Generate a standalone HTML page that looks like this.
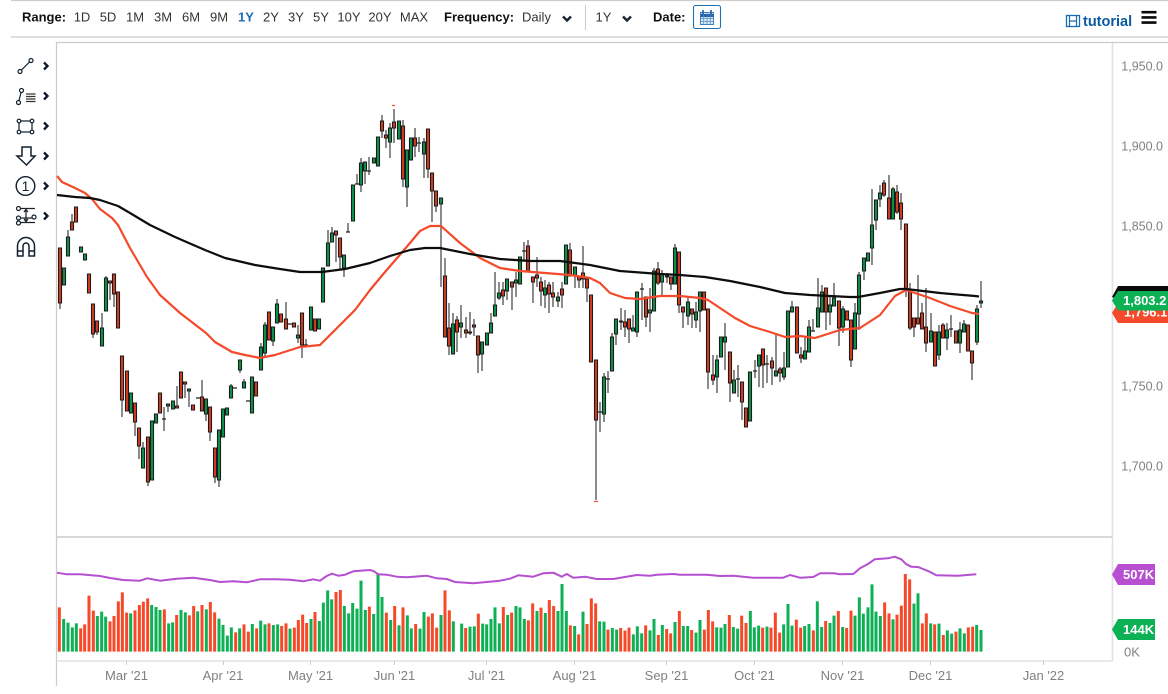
<!DOCTYPE html>
<html><head><meta charset="utf-8"><style>
html,body{margin:0;padding:0;background:#fff;width:1168px;height:694px;overflow:hidden}
svg{display:block}
text{font-family:"Liberation Sans",sans-serif;font-size:13px}
.n{fill:#333;text-anchor:middle}
.b{fill:#111;font-weight:bold}
.a{fill:#808080;text-anchor:middle}
.y{fill:#808080;text-anchor:end;font-size:12.5px}
</style></head><body>
<svg width="1168" height="694" viewBox="0 0 1168 694" xmlns="http://www.w3.org/2000/svg">
<defs><filter id="s" x="-2%" y="-2%" width="104%" height="104%"><feGaussianBlur stdDeviation=".35"/></filter></defs>
<rect width="1168" height="694" fill="#fff"/>
<!-- frame -->
<path d="M11 .5H1168M11 37H1168M56 42.500H1168" stroke="#ccc" stroke-width="1.200" fill="none"/>
<path d="M56.500 42V686" stroke="#ccc" stroke-width="1.200"/>
<path d="M1112.500 43V536M1112.500 538V661" stroke="#e2e2e2" stroke-width="1.600"/>
<path d="M57 537H1113" stroke="#ccc" stroke-width="1.600"/>
<path d="M57 661H1113" stroke="#e2e2e2" stroke-width="1.600"/>
<path d="M126.500 661v4M223.500 661v4M310.500 661v4M394.500 661v4M486.500 661v4M574.500 661v4M666.500 661v4M754.500 661v4M842.500 661v4M930.500 661v4M1043.500 661v4" stroke="#ccc"/>
<path d="M585.500 5V30" stroke="#ccc"/>
<!-- top bar -->
<text class="b" x="22" y="21.500">Range:</text>
<text class="n" x="82" y="21.500">1D</text><text class="n" x="108" y="21.500">5D</text><text class="n" x="135" y="21.500">1M</text><text class="n" x="163" y="21.500">3M</text><text class="n" x="191" y="21.500">6M</text><text class="n" x="219" y="21.500">9M</text>
<text class="n" x="246" y="21.500" style="fill:#1b6db5;font-weight:bold">1Y</text>
<text class="n" x="271" y="21.500">2Y</text><text class="n" x="296" y="21.500">3Y</text><text class="n" x="321" y="21.500">5Y</text><text class="n" x="349" y="21.500">10Y</text><text class="n" x="380" y="21.500">20Y</text><text class="n" x="414" y="21.500">MAX</text>
<text class="b" x="444" y="21.500">Frequency:</text>
<text class="n" x="536.500" y="21.500">Daily</text>
<path d="M563 16.500l4 4 4-4M623 16.500l4 4 4-4" stroke="#1a2433" stroke-width="2.500" fill="none"/>
<text class="n" x="603.500" y="21.500">1Y</text>
<text class="b" x="653" y="21.500">Date:</text>
<rect x="693.500" y="5.500" width="27" height="23" rx="2" fill="#fff" stroke="#1f6fb2" stroke-width="1.100"/>
<rect x="700.500" y="12.500" width="13" height="12" fill="#dbe8f5" stroke="#3f7fc0"/>
<path d="M700.500 15.500h13" stroke="#1f5fa5" stroke-width="3"/>
<path d="M703.700 12v12M707 12v12M710.300 12v12M701 18.500h12M701 21.500h12" stroke="#5a8fc8" stroke-width=".8"/>
<path d="M703 10v4M711 10v4" stroke="#1f5fa5" stroke-width="1.600"/>
<rect x="1066.500" y="15.500" width="13" height="11" fill="#fff" stroke="#1b6db0" stroke-width="1.300"/>
<path d="M1069.500 15v12M1076.500 15v12M1069.500 21h7" stroke="#1b6db0" stroke-width="1.200"/>
<text x="1083" y="26" style="font-size:14.500px;font-weight:bold;fill:#0b5aa0">tutorial</text>
<path d="M1141.500 12.200h15M1141.500 17.400h15M1141.500 22.600h15" stroke="#0a0a0a" stroke-width="2.600"/>
<!-- left tools -->
<g fill="#fff" stroke="#10202f" stroke-width="1.200">
<path d="M21.500 70L29.500 62" fill="none"/><circle cx="20" cy="71.500" r="2"/><circle cx="31" cy="60.500" r="2"/>
<path d="M18.500 102L21.500 91" fill="none"/><circle cx="18.500" cy="102.500" r="2"/><circle cx="21.500" cy="90.500" r="2"/>
<path d="M26 94h9.500M26 96.500h9.500M26 99h9.500M26 101.500h9.500" fill="none" stroke="#333"/>
<rect x="19" y="121" width="13" height="11" fill="none"/><circle cx="19" cy="121" r="1.800"/><circle cx="32" cy="121" r="1.800"/><circle cx="19" cy="132" r="1.800"/><circle cx="32" cy="132" r="1.800"/>
<path d="M22 147H31V156H35L26.500 165L17 156H22Z" stroke-width="1.500"/>
<circle cx="25.500" cy="186" r="9.300" stroke-width="1.400"/>
<path d="M17 208.500H35M17 218H35M17 222.500H35" stroke="#222" fill="none"/>
<path d="M26 209.500V222M24 212l2-2.500 2 2.500M24 219l2 2.500 2-2.500" fill="none"/>
<circle cx="18.500" cy="208.500" r="2"/><circle cx="18.500" cy="218" r="2"/><circle cx="18.500" cy="223" r="2"/><circle cx="34" cy="217" r="2"/>
<path d="M17.500 256V246a8.500 8.500 0 0 1 17 0V256H29V246a3 3 0 0 0-6 0V256ZM17.500 251H23M29 251H34.500" stroke-width="1.500"/>
</g>
<text x="25.500" y="191" style="font-size:14px;fill:#10202f;text-anchor:middle">1</text>
<path d="M44 62.500l3.500 3.500-3.500 3.500M44 92.500l3.500 3.500-3.500 3.500M44 122.500l3.500 3.500-3.500 3.500M44 152.500l3.500 3.500-3.500 3.500M44 182.500l3.500 3.500-3.500 3.500M44 212.500l3.500 3.500-3.500 3.500" stroke="#0c1626" stroke-width="2.300" fill="none"/>
<g filter="url(#s)">
<!-- wicks -->
<path stroke="#777" stroke-width="1.700" fill="none" d="M60 248V309M68 230V237M72 214V222M93 334V338M97 332V335M102 313V328M106 276V278M110 283V300M114 294V307M122 400V417M135 422V436M139 446V459M143 442V448M148 482V486M164 407V431M168 406V412M177 386V406M185 384V398M189 391V407M202 380V397M206 414V421M210 432V441M215 477V483M219 480V487M231 384V386M240 370V373M244 379V382M261 343V347M265 322V357M273 341V346M277 299V304M286 302V319M298 325V343M302 345V358M306 339V347M328 230V243M332 227V233M336 235V262M340 257V270M344 268V277M348 223V232M357 174V184M361 158V192M365 171V184M369 157V175M382 115V138M386 130V148M390 123V158M394 109V143M403 120V187M407 187V207M415 128V157M419 137V152M424 138V178M428 169V178M432 191V222M436 206V212M441 204V287M445 258V276M449 303V355M453 313V324M457 316V352M461 305V338M466 317V338M470 312V335M474 319V336M478 355V373M482 354V371M491 313V323M495 272V305M499 282V300M503 282V305M507 291V300M512 287V310M516 272V297M524 242V260M528 240V246M533 282V303M537 257V287M541 277V306M545 280V308M549 282V313M553 282V307M558 292V307M562 282V308M570 243V250M575 276V288M579 280V288M583 246V288M587 288V302M596 420V500M600 402V432M604 373V422M608 371V393M612 333V337M616 334V345M621 308V330M625 310V337M629 329V343M633 315V328M637 332V337M642 283V320M646 317V327M650 288V332M654 268V271M658 262V285M662 270V295M667 273V283M671 284V290M675 244V248M679 305V313M683 312V328M688 297V325M692 314V328M696 302V328M700 311V332M708 372V389M713 355V385M717 355V393M721 353V357M725 323V370M730 383V402M734 370V380M738 365V397M742 402V420M755 360V378M759 366V387M763 365V388M767 355V383M772 357V385M776 333V371M780 367V382M784 352V380M792 301V307M801 347V363M805 337V351M809 320V327M813 319V331M818 278V308M822 285V292M826 312V330M830 295V325M834 283V298M839 328V346M843 306V333M851 360V367M855 303V313M859 272V330M864 271V280M872 189V265M876 220V230M880 185V207M884 180V197M889 175V198M893 187V189M897 185V214M901 193V230M906 290V297M910 283V330M914 327V337M918 275V318M922 303V313M926 288V352M931 313V331M939 325V360M943 323V325M947 323V350M951 315V337M960 322V353M964 320V324M972 363V380M977 305V345M981 281V308"/>
<g transform="translate(-1.500 0)" stroke="#1e1e1e" stroke-width="1.100">
<path fill="#0c9449" d="M64 268h3v17h-3zM68 237h3v19h-3zM81 247h3v5h-3zM85 254h3v6h-3zM102 328h3v18h-3zM106 278h3v33h-3zM131 393h3v20h-3zM143 448h3v20h-3zM152 421h3v59h-3zM156 414h3v9h-3zM168 404h3v2h-3zM173 401h3v8h-3zM189 389h3v2h-3zM206 399h3v15h-3zM219 430h3v50h-3zM223 409h3v28h-3zM227 408h3v7h-3zM231 386h3v12h-3zM240 360h3v10h-3zM244 382h3v6h-3zM252 377h3v36h-3zM261 347h3v23h-3zM265 325h3v28h-3zM273 327h3v14h-3zM277 304h3v19h-3zM298 335h3v3h-3zM311 307h3v23h-3zM319 319h3v10h-3zM323 268h3v34h-3zM328 243h3v23h-3zM332 233h3v9h-3zM344 255h3v13h-3zM353 185h3v36h-3zM361 163h3v22h-3zM365 162h3v9h-3zM374 158h3v5h-3zM378 137h3v29h-3zM390 128h3v14h-3zM399 121h3v18h-3zM407 150h3v37h-3zM411 138h3v22h-3zM424 142h3v12h-3zM441 198h3v6h-3zM453 324h3v30h-3zM461 323h3v4h-3zM482 342h3v12h-3zM487 333h3v12h-3zM491 323h3v10h-3zM495 305h3v11h-3zM499 293h3v5h-3zM507 279h3v12h-3zM516 280h3v3h-3zM520 257h3v27h-3zM545 288h3v7h-3zM558 297h3v4h-3zM566 245h3v39h-3zM575 267h3v9h-3zM604 377h3v37h-3zM612 337h3v34h-3zM616 319h3v15h-3zM633 328h3v3h-3zM637 292h3v40h-3zM650 310h3v3h-3zM654 271h3v40h-3zM662 274h3v8h-3zM675 248h3v36h-3zM688 302h3v14h-3zM696 312h3v8h-3zM700 292h3v19h-3zM717 360h3v17h-3zM721 337h3v20h-3zM725 337h3v5h-3zM734 380h3v13h-3zM750 372h3v49h-3zM759 355h3v11h-3zM776 371h3v5h-3zM784 368h3v9h-3zM788 311h3v56h-3zM792 307h3v5h-3zM805 351h3v8h-3zM809 327h3v25h-3zM818 308h3v19h-3zM822 292h3v20h-3zM830 305h3v7h-3zM834 298h3v8h-3zM843 309h3v18h-3zM855 313h3v36h-3zM859 275h3v39h-3zM864 258h3v13h-3zM868 253h3v8h-3zM872 225h3v23h-3zM876 200h3v20h-3zM880 193h3v6h-3zM893 189h3v30h-3zM931 331h3v11h-3zM939 332h3v23h-3zM947 330h3v8h-3zM960 330h3v13h-3zM964 324h3v8h-3zM977 309h3v33h-3zM981 301h3v2h-3z"/>
<path fill="#d83b20" d="M60 248h3v55h-3zM72 222h3v8h-3zM76 207h3v15h-3zM89 274h3v19h-3zM93 304h3v30h-3zM97 321h3v11h-3zM110 281h3v2h-3zM114 274h3v20h-3zM118 292h3v36h-3zM122 356h3v44h-3zM127 371h3v40h-3zM135 403h3v19h-3zM139 428h3v18h-3zM148 437h3v45h-3zM160 393h3v20h-3zM177 406h3v2h-3zM181 372h3v26h-3zM185 382h3v2h-3zM193 405h3v5h-3zM202 397h3v14h-3zM210 407h3v25h-3zM215 448h3v29h-3zM256 382h3v14h-3zM269 312h3v28h-3zM281 314h3v8h-3zM286 319h3v10h-3zM294 323h3v4h-3zM302 313h3v32h-3zM315 319h3v12h-3zM336 231h3v4h-3zM340 238h3v19h-3zM382 121h3v10h-3zM386 135h3v3h-3zM394 122h3v6h-3zM403 126h3v53h-3zM415 138h3v8h-3zM428 129h3v40h-3zM432 173h3v18h-3zM436 191h3v15h-3zM445 276h3v61h-3zM449 328h3v18h-3zM457 320h3v12h-3zM466 330h3v3h-3zM470 332h3v1h-3zM474 325h3v2h-3zM478 336h3v19h-3zM503 290h3v6h-3zM512 282h3v5h-3zM528 246h3v26h-3zM533 277h3v5h-3zM537 275h3v3h-3zM541 282h3v9h-3zM549 285h3v9h-3zM553 293h3v4h-3zM562 289h3v6h-3zM570 250h3v26h-3zM579 277h3v3h-3zM583 273h3v6h-3zM587 279h3v9h-3zM591 295h3v67h-3zM596 360h3v60h-3zM621 321h3v1h-3zM625 322h3v5h-3zM629 319h3v10h-3zM646 297h3v20h-3zM658 269h3v14h-3zM667 276h3v1h-3zM671 277h3v7h-3zM679 252h3v53h-3zM683 307h3v5h-3zM692 309h3v5h-3zM704 292h3v18h-3zM708 309h3v63h-3zM713 375h3v5h-3zM730 352h3v31h-3zM742 382h3v20h-3zM746 408h3v19h-3zM763 349h3v16h-3zM772 361h3v7h-3zM780 369h3v4h-3zM797 307h3v46h-3zM801 355h3v3h-3zM826 288h3v24h-3zM839 301h3v27h-3zM847 311h3v9h-3zM851 320h3v40h-3zM884 183h3v12h-3zM889 198h3v21h-3zM897 192h3v20h-3zM901 203h3v16h-3zM906 224h3v66h-3zM910 292h3v36h-3zM914 318h3v9h-3zM918 318h3v6h-3zM922 313h3v16h-3zM926 327h3v16h-3zM935 332h3v34h-3zM943 325h3v13h-3zM956 331h3v12h-3zM968 325h3v26h-3zM972 351h3v12h-3z"/>
</g>
<path stroke="#222" stroke-width="1.200" fill="none" d="M162 419h4M233 388h4M196 398h4M246 401h4M288 324h4M304 345h4M346 232h4M355 184h4M367 171h4M417 143h4M522 251h4M598 412h4M606 379h4M640 289h4M736 379h4M753 371h4M765 364h4M811 331h4M949 329h4"/>
<path d="M392 105.500h3M594 501.500h4" stroke="#f05030" stroke-width="1.200"/>
<!-- moving averages -->
<path fill="none" stroke="#f4492a" stroke-width="2.200" stroke-linejoin="round" d="M57 176L62 182L75 188L85 193L92 199L100 209L112 218L118 225L130 248L147 277L160 295L180 313L206 333L215 342L232 352L245 355L260 358L275 355L300 347L320 345L340 325L355 310L370 290L385 272L398 257L410 243L420 231L430 226L441 226L460 243L480 258L500 268L520 271L545 273L570 275L590 278L600 283L610 293L625 298L640 299L660 296L680 296L700 298L708 300L720 308L735 318L750 326L770 332L785 337L800 336L815 338L840 330L860 328L880 315L895 296L906 290L930 298L950 306L972 313L979 314"/>
<path fill="none" stroke="#0c0c0c" stroke-width="2.200" stroke-linejoin="round" d="M57 195L75 197L90 198L100 200L118 206L130 213L150 225L175 237L205 250L225 258L255 265L280 269L300 272L322 272L345 269L370 263L390 256L410 250L425 248L440 248L470 254L500 259L530 261L560 261L590 265L620 271L660 274L680 275L705 277L730 281L760 287L785 293L810 295L850 297L858 297L880 293L900 289L906 289L940 293L975 296L979 296.500"/>
<!-- volume -->
<g fill="none" stroke-width="9" transform="translate(50 560) scale(.33333)">
<path stroke="#0cb055" d="M41 275V177M54 275V188M67 275V202M79 275V190M142 275V168M155 275V155M167 275V170M242 275V160M305 275V135M318 275V141M330 275V150M356 275V190M368 275V187M393 275V150M406 275V157M443 275V154M469 275V148M507 275V176M519 275V195M532 275V227M544 275V202M569 275V205M607 275V192M632 275V182M645 275V193M670 275V195M683 275V193M720 275V206M783 275V177M808 275V183M820 275V128M833 275V91M845 275V118M883 275V138M896 275V160M908 275V129M921 275V146M933 275V62M946 275V150M971 275V162M984 275V42M996 275V111M1022 275V180M1047 275V196M1072 275V166M1084 275V205M1110 275V206M1122 275V156M1173 275V165M1210 275V184"/>
<path stroke="#f54a2b" d="M28 275V142M92 275V205M104 275V193M117 275V107M130 275V152M180 275V184M192 275V168M205 275V124M217 275V97M230 275V158M255 275V151M268 275V135M280 275V125M293 275V115M343 275V148M380 275V165M418 275V166M431 275V138M456 275V135M481 275V126M494 275V157M557 275V217M582 275V193M595 275V215M620 275V205M657 275V190M695 275V198M708 275V190M733 275V203M745 275V180M758 275V164M770 275V189M795 275V156M858 275V96M871 275V90M958 275V140M1009 275V158M1034 275V138M1059 275V142M1097 275V192M1135 275V170M1147 275V160M1160 275V203M1185 275V91M1198 275V151"/>
</g>
<g fill="none" stroke-width="9" transform="translate(460 560) scale(.33333)">
<path stroke="#0cb055" d="M5 275V191M30 275V200M43 275V199M68 275V191M80 275V193M93 275V177M105 275V142M118 275V190M143 275V165M168 275V138M180 275V142M193 275V177M231 275V153M256 275V159M294 275V153M306 275V72M319 275V153M344 275V198M369 275V155M419 275V184M432 275V185M457 275V204M470 275V209M520 275V223M532 275V199M545 275V220M570 275V211M582 275V177M607 275V195M645 275V186M670 275V198M683 275V198M708 275V218M720 275V180M770 275V202M783 275V203M795 275V192M820 275V201M833 275V206M871 275V153M883 275V202M896 275V197M921 275V200M971 275V193M984 275V132M996 275V197M1034 275V198M1047 275V192M1072 275V124M1085 275V201M1110 275V189M1122 275V167M1148 275V201M1185 275V167M1198 275V112M1210 275V161"/>
<path stroke="#f54a2b" d="M17 275V204M55 275V161M130 275V141M155 275V158M205 275V181M218 275V130M243 275V143M268 275V120M281 275V138M331 275V196M356 275V223M381 275V192M394 275V115M407 275V130M444 275V209M482 275V204M495 275V212M507 275V203M557 275V196M595 275V225M620 275V207M632 275V220M658 275V153M695 275V210M733 275V209M745 275V150M758 275V184M808 275V165M845 275V167M858 275V189M908 275V203M933 275V203M946 275V158M959 275V218M1009 275V179M1022 275V203M1060 275V211M1097 275V183M1135 275V153M1160 275V204M1173 275V152"/>
</g>
<g fill="none" stroke-width="9" transform="translate(868 530) scale(.33333)">
<path stroke="#0cb055" d="M0 365V232M12 365V163M24 365V245M37 365V258M75 365V268M138 365V221M150 365V190M188 365V280M213 365V281M238 365V301M251 365V311M276 365V295M289 365V310M326 365V285M339 365V300"/>
<path stroke="#f54a2b" d="M50 365V217M63 365V250M87 365V254M100 365V227M112 365V132M125 365V148M163 365V280M175 365V250M200 365V283M226 365V315M264 365V305M301 365V292M314 365V290"/>
</g>
<path fill="none" stroke="#b44fd0" stroke-width="2" stroke-linejoin="round" d="M57 572.700L66.700 574.300L80 574.300L100 576L110 578L123.300 580L140 580.700L147.300 578.300L160 580.700L176.700 578.700L193.300 577.700L210 580L220 582L233.300 581.300L246.700 582.300L260 579.300L276.700 579.300L290 579.700L303.300 581.300L313.300 579.300L320 580.700L326.700 576L332 573.700L338.300 575.700L345 574.700L353.300 571.300L370 570L374 571.300L378.300 574.300L386.700 574.700L396.700 576.700L406.700 577.300L426.700 575.700L436.700 578.300L446.700 579L455 582L473.300 583.300L486.700 582L500 580.700L510 578.700L518.300 575.300L533.300 576.700L543.300 573.300L553.300 572.700L561.700 576.700L566.700 574L573.300 577.700L585 576.700L596.700 579L613.300 579L636.700 575L650 575.700L656.700 574.700L673.300 574L680 574.700L706.700 574.700L720 576L733.300 575.700L753.300 577.700L783.300 577.700L790 575L800 577.700L813.300 577L820 573.300L833.300 573.300L840 574.300L853.300 574L860 568.300L868 564L874.700 559.300L888 558.300L894.700 556.700L901.300 559.300L906.300 564.300L911.300 566.700L918 567L929.700 571.700L936.300 575.300L958 575.700L976.300 574.300"/>
</g>
<!-- y axis -->
<text class="y" x="1163" y="70.500">1,950.0</text><text class="y" x="1163" y="150.500">1,900.0</text><text class="y" x="1163" y="230.500">1,850.0</text><text class="y" x="1163" y="390.500">1,750.0</text><text class="y" x="1163" y="470.500">1,700.0</text>
<!-- x axis -->
<text class="a" x="126.500" y="680">Mar '21</text><text class="a" x="223" y="680">Apr '21</text><text class="a" x="310.500" y="680">May '21</text><text class="a" x="394.500" y="680">Jun '21</text><text class="a" x="486.500" y="680">Jul '21</text><text class="a" x="574.500" y="680">Aug '21</text><text class="a" x="666.500" y="680">Sep '21</text><text class="a" x="754.500" y="680">Oct '21</text><text class="a" x="842.500" y="680">Nov '21</text><text class="a" x="930.500" y="680">Dec '21</text><text class="a" x="1043.500" y="680">Jan '22</text>
<!-- badges -->
<path d="M1112 313L1118 303H1168V323H1118Z" fill="#f4492a"/>
<text x="1124" y="316.500" style="fill:#fff;font-weight:bold">1,796.1</text>
<path d="M1112 297L1118 286H1168V300H1118Z" fill="#0a0a0a"/>
<path d="M1112 300.500L1118 291H1168V310.500H1118Z" fill="#0cb055"/>
<text x="1123" y="305" style="fill:#fff;font-weight:bold">1,803.2</text>
<path d="M1112 574.500L1118 564H1155V585H1118Z" fill="#b84fd0"/>
<text x="1123" y="579" style="fill:#fff;font-weight:bold">507K</text>
<path d="M1112 629.500L1118 619H1155V640H1118Z" fill="#0cb055"/>
<text x="1123" y="634" style="fill:#fff;font-weight:bold">144K</text>
<text x="1124" y="656.500" style="fill:#808080">0K</text>
</svg>
</body></html>
